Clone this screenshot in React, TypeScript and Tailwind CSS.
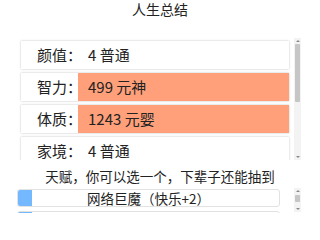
const summary = [
  { label: '颜值：', value: '4 普通', hot: false },
  { label: '智力：', value: '499 元神', hot: true },
  { label: '体质：', value: '1243 元婴', hot: true },
  { label: '家境：', value: '4 普通', hot: false },
];

const ScrollBar = ({ h, thumbTop, thumbH }: { h: string; thumbTop: string; thumbH: string }) => (
  <div className={`flex w-[7px] flex-col items-center bg-[#f3f3f3] ${h}`}>
    <div className="mt-[2px] h-0 w-0 border-x-[2px] border-b-[2px] border-x-transparent border-b-[#8a8a8a]" />
    <div className={`w-[5px] rounded-[1px] bg-[#c6c6c6] ${thumbTop} ${thumbH}`} />
    <div className="mt-auto mb-[2px] h-0 w-0 border-x-[2px] border-t-[2px] border-x-transparent border-t-[#8a8a8a]" />
  </div>
);

const Paren = ({ c }: { c: string }) => (
  <span style={{ fontFamily: '"Noto Sans CJK TC", sans-serif' }}>{c}</span>
);

export default function App() {
  return (
    <div
      className="flex h-[229px] w-[320px] flex-col overflow-hidden bg-white text-[#222]"
      style={{ fontFamily: '"Noto Sans CJK SC", "Noto Sans", sans-serif' }}
    >
      <div className="text-center text-[14px] leading-[18px]">人生总结</div>

      <div className="mt-[20px] flex h-[122px] overflow-hidden">
        <ul className="ml-[21px] flex w-[268px] flex-col gap-[4px] pt-[3px]">
          {summary.map((row) => (
            <li
              key={row.label}
              className="flex h-[28px] shrink-0 bg-white text-[15px] leading-[28px] shadow-[0_0_2px_rgba(0,0,0,0.25)]"
            >
              <span className="w-[57px] shrink-0 whitespace-nowrap pl-[16px]">{row.label}</span>
              <span className={`relative flex-1 pl-[10px] ${row.hot ? 'bg-[#ffa07a]' : 'bg-white'}`}>{row.value}</span>
            </li>
          ))}
        </ul>
        <div className="ml-[5px]">
          <ScrollBar h="h-[122px]" thumbTop="mt-[2px]" thumbH="h-[58px]" />
        </div>
      </div>

      <div className="mt-[7px] text-center text-[13.5px] leading-[18px]">天赋，你可以选一个，下辈子还能抽到</div>

      <div className="mt-[3px] flex h-[25px] overflow-hidden">
        <ul className="ml-[17px] flex w-[263px] flex-col gap-[4px] pt-[1px]">
          <li className="flex h-[18px] shrink-0 overflow-hidden rounded-[3px] border border-[#e2e2e2] text-[13.5px] leading-[16px]">
            <span className="w-[14px] shrink-0 bg-[#74b9ff]" />
            <span className="flex-1 pr-[14px] text-center">
              网络巨魔<Paren c="（" />快乐+2<Paren c="）" />
            </span>
          </li>
          <li className="flex h-[18px] shrink-0 overflow-hidden rounded-[3px] border border-[#e2e2e2]">
            <span className="w-[14px] shrink-0 bg-[#74b9ff]" />
          </li>
        </ul>
        <div className="ml-[14px]">
          <ScrollBar h="h-[24px]" thumbTop="mt-[3px]" thumbH="h-[7px]" />
        </div>
      </div>
    </div>
  );
}
